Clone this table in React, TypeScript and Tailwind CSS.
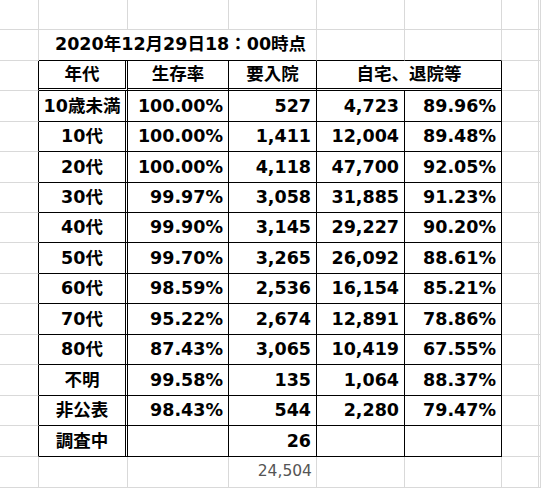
import React from "react";

const rows = [
  ["10歳未満", "100.00%", "527", "4,723", "89.96%"],
  ["10代", "100.00%", "1,411", "12,004", "89.48%"],
  ["20代", "100.00%", "4,118", "47,700", "92.05%"],
  ["30代", "99.97%", "3,058", "31,885", "91.23%"],
  ["40代", "99.90%", "3,145", "29,227", "90.20%"],
  ["50代", "99.70%", "3,265", "26,092", "88.61%"],
  ["60代", "98.59%", "2,536", "16,154", "85.21%"],
  ["70代", "95.22%", "2,674", "12,891", "78.86%"],
  ["80代", "87.43%", "3,065", "10,419", "67.55%"],
  ["不明", "99.58%", "135", "1,064", "88.37%"],
  ["非公表", "98.43%", "544", "2,280", "79.47%"],
  ["調査中", "", "26", "", ""],
];

// gray spreadsheet gridline cell
const grid = "border-r border-b border-[#d9d9d9]";
const num = "flex items-center justify-end pr-[5px] border-r border-b border-black text-[17.5px]";

export default function App() {
  return (
    <div className="w-[541px] h-[488px] overflow-hidden bg-white text-black font-['DejaVu_Sans','Noto_Sans_CJK_JP',sans-serif] font-bold">
      <div className="grid grid-cols-[39px_89px_101px_88px_88px_97px_37px_2px] grid-rows-[30px_31px_30px_31px_30px_31px_30px_30px_31px_30px_31px_30px_31px_30px_31px_31px_31px]">
        {/* row 1: empty */}
        {Array.from({ length: 8 }).map((_, i) => (
          <div key={`top-${i}`} className={grid} />
        ))}

        {/* row 2: title */}
        <div className={grid} />
        <div className="col-span-3 flex items-center pl-[16px] whitespace-nowrap text-[17.5px] leading-none border-r border-r-[#d9d9d9] border-b border-b-black">
          2020年12月29日18：00時点
        </div>
        <div className="border-r border-r-[#d9d9d9] border-b border-b-black" />
        <div className="border-r border-r-[#d9d9d9] border-b border-b-black" />
        <div className={grid} />
        <div className={grid} />

        {/* header */}
        <div className="border-r border-r-black border-b border-b-[#d9d9d9]" />
        <div className="flex items-center justify-center text-[17.5px] border-r-[3px] border-double border-b-[3px] border-black">
          年代
        </div>
        <div className="flex items-center justify-center text-[17.5px] border-r border-b-[3px] border-double border-black">
          生存率
        </div>
        <div className="flex items-center justify-center text-[17.5px] border-r border-b-[3px] border-double border-black">
          要入院
        </div>
        <div className="col-span-2 flex items-center justify-center text-[17.5px] border-r border-b-[3px] border-double border-black">
          自宅、退院等
        </div>
        <div className={grid} />
        <div className={grid} />

        {rows.map((r, i) => (
          <React.Fragment key={i}>
            <div className="border-r border-r-black border-b border-b-[#d9d9d9]" />
            <div className="flex items-center justify-center text-[17.5px] border-r-[3px] border-double border-b border-black">
              {r[0]}
            </div>
            <div className={num}>{r[1]}</div>
            <div className={num}>{r[2]}</div>
            <div className={num}>{r[3]}</div>
            <div className={num}>{r[4]}</div>
            <div className={grid} />
            <div className={grid} />
          </React.Fragment>
        ))}

        {/* total row */}
        <div className={grid} />
        <div className={grid} />
        <div className={grid} />
        <div className={`${grid} flex items-center justify-end pr-[4px] text-[15.5px] font-normal text-[#555]`}>
          24,504
        </div>
        <div className={grid} />
        <div className={grid} />
        <div className={grid} />
        <div className={grid} />
      </div>
    </div>
  );
}
